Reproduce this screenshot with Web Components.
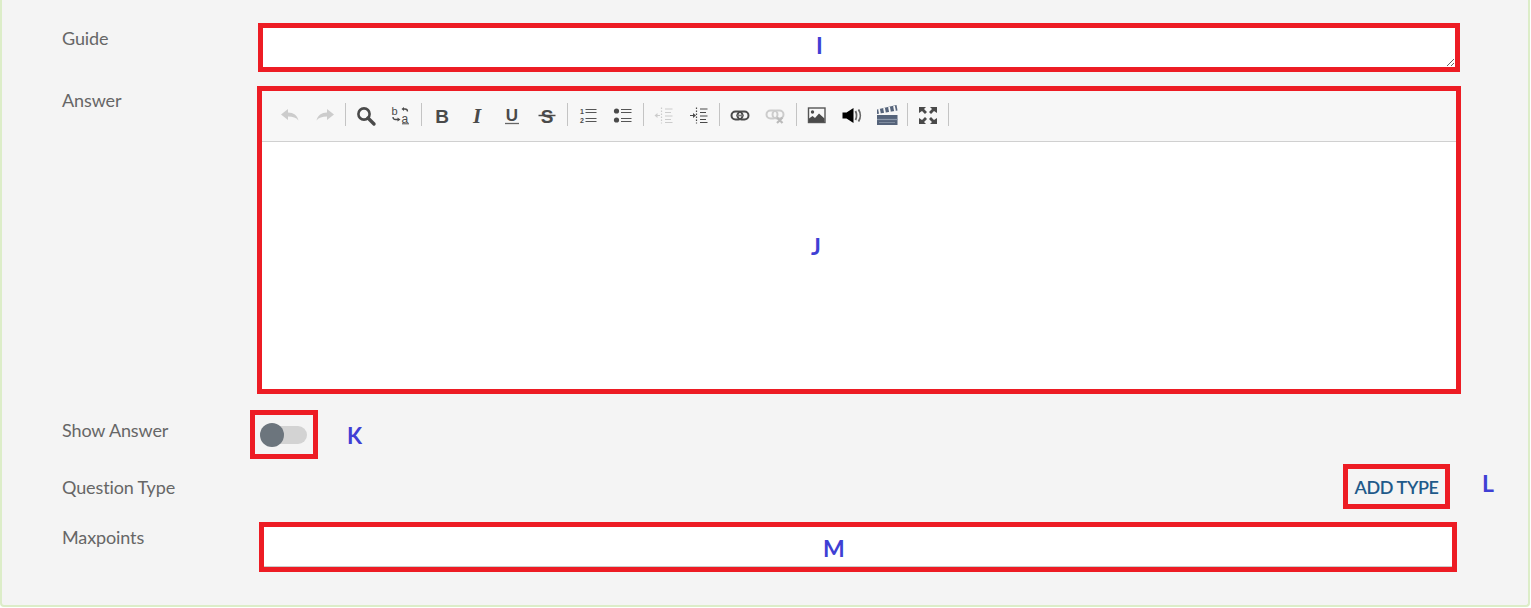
<!DOCTYPE html>
<html lang="en">
<head>
<meta charset="utf-8">
<title>Question form</title>
<style>
    html, body { margin: 0; background: #fff; font-family: Lato, "Liberation Sans", sans-serif; }
</style>
</head>
<body>
<form-panel>
    <form-row label="Guide" label-top="3">
        <guide-field></guide-field>
    </form-row>
    <form-row label="Answer" label-top="2">
        <rich-editor></rich-editor>
    </form-row>
    <form-row label="Show Answer" label-top="8">
        <show-toggle></show-toggle>
    </form-row>
    <form-row label="Question Type" label-top="11">
        <add-type></add-type>
    </form-row>
    <form-row label="Maxpoints" label-top="3">
        <max-points></max-points>
    </form-row>
</form-panel>

<script>
const ICONS = {
    undo: `<path fill="#ccc" d="M1 9.500 8 4v3.400c5.500 0 9.300 2.700 10.500 8-2.500-3-5.500-4-10.500-4V15z"/>`,
    redo: `<path fill="#ccc" d="M19 9.500 12 4v3.400c-5.500 0-9.300 2.700-10.500 8 2.500-3 5.500-4 10.500-4V15z"/>`,
    search: `<circle cx="8" cy="9" r="5.600" fill="none" stroke="#4a4a4a" stroke-width="2.600"/><path d="M12 13l6 6" stroke="#4a4a4a" stroke-width="3.400" stroke-linecap="round"/>`,
    replace: `<text x="0.500" y="9.500" font-family="Liberation Sans" font-size="11" fill="#4a4a4a">b</text><text x="10.500" y="17.500" font-family="Liberation Sans" font-size="12" fill="#4a4a4a">a</text><path d="M11 18.800h7" stroke="#4a4a4a" stroke-width="1"/><path d="M16.500 6.500c0-1.500-1-2.500-2.500-2.500h-2" fill="none" stroke="#4a4a4a" stroke-width="1.300"/><path d="M10.500 4l2.500-2v4z" fill="#4a4a4a"/><path d="M2 12c0 1.500 1 2.500 2.500 2.500H7" fill="none" stroke="#4a4a4a" stroke-width="1.300"/><path d="M9.500 14.500l-3-2v4z" fill="#4a4a4a"/>`,
    bold: `<text x="10" y="17.500" text-anchor="middle" font-family="Liberation Sans" font-weight="700" font-size="19" fill="#4a4a4a">B</text>`,
    italic: `<text x="10" y="17.500" text-anchor="middle" font-family="Liberation Serif" font-style="italic" font-weight="700" font-size="21" fill="#4a4a4a">I</text>`,
    underline: `<text x="10" y="15.500" text-anchor="middle" font-family="Liberation Sans" font-weight="700" font-size="17" fill="#4a4a4a">U</text><path d="M3 18.500h14" stroke="#666" stroke-width="1.300"/>`,
    strike: `<text x="10" y="17.500" text-anchor="middle" font-family="Liberation Sans" font-weight="700" font-size="19" fill="#4a4a4a">S</text><path d="M1.500 10.500h17" stroke="#4a4a4a" stroke-width="1.500"/>`,
    ordered: `<text x="2" y="9" font-family="Liberation Sans" font-weight="700" font-size="7" fill="#4a4a4a">1</text><text x="2" y="17.500" font-family="Liberation Sans" font-weight="700" font-size="7" fill="#4a4a4a">2</text><path d="M7.500 4.500h11M7.500 7.500h11M7.500 13.500h11M7.500 16.500h11" stroke="#555" stroke-width="1.200"/>`,
    bullets: `<circle cx="3.500" cy="6" r="2.600" fill="#4a4a4a"/><circle cx="3.500" cy="15" r="2.600" fill="#4a4a4a"/><path d="M8 4.500h10.500M8 7.500h10.500M8 13.500h10.500M8 16.500h10.500" stroke="#555" stroke-width="1.200"/>`,
    outdent: `<g stroke="#ccc" stroke-width="1.200" fill="none"><path d="M7.500 2.500v16" stroke-dasharray="1.500 1.500"/><path d="M11 4h7.500M11 7.500h6M11 11h7.500M11 14.500h6M11 17.500h7.500M6 10.500H1.500"/></g><path d="M0.500 10.500l3-2.500v5z" fill="#ccc"/>`,
    indent: `<g stroke="#4a4a4a" stroke-width="1.200" fill="none"><path d="M7.500 2.500v16" stroke-dasharray="1.500 1.500"/><path d="M11 4h7.500M11 7.500h6M11 11h7.500M11 14.500h6M11 17.500h7.500M1 10.500h4"/></g><path d="M7 10.500 4 8v5z" fill="#4a4a4a"/>`,
    link: `<g fill="none" stroke="#4a4a4a" stroke-width="2"><rect x="1.500" y="6.500" width="11" height="8" rx="4"/><rect x="7.500" y="6.500" width="11" height="8" rx="4"/></g><path d="M6 10.500h8" stroke="#777" stroke-width="1.600"/>`,
    unlink: `<g fill="none" stroke="#ccc" stroke-width="2"><rect x="1.500" y="5.500" width="11" height="8" rx="4"/><rect x="7.500" y="5.500" width="11" height="8" rx="4"/></g><path d="M12 12.500l5.500 5.500M17.500 12.500 12 18" stroke="#bbb" stroke-width="2.200"/>`,
    image: `<rect x="1.500" y="3" width="16.500" height="14.500" fill="#f7f7f7" stroke="#555" stroke-width="1.400"/><circle cx="5.500" cy="7" r="1.700" fill="#4a4a4a"/><path d="M2 17v-3.500l3.500-2.500 2.500 2 4-4.500 5.500 5V17z" fill="#4a4a4a"/>`,
    sound: `<path d="M0.500 7.500h4L11.500 3v15l-7-4.500h-4z" fill="#000"/><path d="M13.500 6c1.300 2.800 1.300 6.200 0 9M16.500 4.500c2.300 3.500 2.300 8.500 0 12" fill="none" stroke="#666" stroke-width="1.800"/>`,
    video: `<path d="M0 10h20.500v10H0z" fill="#55637a"/><path d="M0 4.500 19.500 0l1 5.500L0 9z" fill="#55637a"/><path d="M3 9l-1-5M8 8l-1-5M13 7l-1-5M18 6l-1-5" stroke="#f7f7f7" stroke-width="1.800"/><path d="M0 14.500h20.500" stroke="#8c98aa" stroke-width="1.200"/><path d="M2 17.500h16" stroke="#7f8c9f" stroke-width="1"/>`,
    fullscreen: `<g fill="#4a4a4a"><path d="M1 2h7L6 4l3 3-2 2-3-3-3 2z"/><path d="M19 2h-7l2 2-3 3 2 2 3-3 3 2z"/><path d="M1 19h7l-2-2 3-3-2-2-3 3-3-2z"/><path d="M19 19h-7l2-2-3-3 2-2 3 3 3-2z"/></g>`
};

class FormPanel extends HTMLElement {
    constructor() {
        super();
        this.attachShadow({ mode: 'open' });
        this.shadowRoot.innerHTML = `
            <style>
                :host {
                    display: flex;
                    flex-direction: column;
                    box-sizing: border-box;
                    height: 607px;
                    margin-right: 1px;
                    padding: 23px 0 0 0;
                    background: #f4f4f4;
                    border: 2px solid #dcedc8;
                    border-top: none;
                    border-radius: 0 0 4px 4px;
                }
            </style>
            <slot></slot>
        `;
    }
}

class FormRow extends HTMLElement {
    constructor() {
        super();
        this.attachShadow({ mode: 'open' });
        this.shadowRoot.innerHTML = `
            <style>
                :host {
                    display: grid;
                    grid-template-columns: 195px 1fr;
                    padding-left: 60px;
                    color: #666;
                    font: 400 18px/24px Lato, "Liberation Sans", sans-serif;
                }
                .label { letter-spacing: -0.12px; }
            </style>
            <div class="label" id="label"></div>
            <div><slot></slot></div>
        `;
    }

    connectedCallback() {
        const label = this.shadowRoot.querySelector('#label');
        label.textContent = this.getAttribute('label');
        label.style.paddingTop = this.getAttribute('label-top') + 'px';
    }
}

class GuideField extends HTMLElement {
    constructor() {
        super();
        this.attachShadow({ mode: 'open' });
        this.shadowRoot.innerHTML = `
            <style>
                :host { display: block; position: relative; margin: 0 68px 14px 1px; height: 49px; }
                textarea {
                    display: block;
                    box-sizing: border-box;
                    width: 100%;
                    height: 49px;
                    border: 5px solid #ed1c24;
                    background: #fff;
                    outline: none;
                    padding: 0;
                }
                span {
                    position: absolute;
                    left: 558px;
                    top: 7px;
                    color: #3f3fd4;
                    font: 700 23px/30px Lato, sans-serif;
                }
            </style>
            <textarea aria-label="Guide"></textarea>
            <span>I</span>
        `;
    }
}

class ToolIcon extends HTMLElement {
    constructor() {
        super();
        this.attachShadow({ mode: 'open' });
        this.shadowRoot.innerHTML = `
            <style>
                :host { display: flex; align-items: center; justify-content: center; width: 35px; height: 24px; }
                svg { width: 20px; height: 20px; display: block; overflow: visible; }
            </style>
            <svg viewBox="0 0 20 20">${ICONS[this.getAttribute('name')] || ''}</svg>
        `;
    }
}

class RichEditor extends HTMLElement {
    constructor() {
        super();
        this.attachShadow({ mode: 'open' });
        const groups = [
            ['undo', 'redo'],
            ['search', 'replace'],
            ['bold', 'italic', 'underline', 'strike'],
            ['ordered', 'bullets'],
            ['outdent', 'indent'],
            ['link', 'unlink'],
            ['image', 'sound', 'video'],
            ['fullscreen']
        ];
        const bar = groups.map(group =>
            group.map(name => `<tool-icon name="${name}"></tool-icon>`).join('') + '<i></i>'
        ).join('');
        this.shadowRoot.innerHTML = `
            <style>
                :host {
                    display: flex;
                    flex-direction: column;
                    position: relative;
                    box-sizing: border-box;
                    height: 308px;
                    margin: 0 67px 16px 0;
                    border: 5px solid #ed1c24;
                    background: #fff;
                }
                .bar {
                    display: flex;
                    align-items: center;
                    height: 47px;
                    padding: 0 0 3px 10px;
                    background: #f7f7f7;
                    border-bottom: 1px solid #d0d0d0;
                }
                i { width: 1px; height: 23px; margin: 0 2.600px; background: #c4c4c4; }
                span {
                    position: absolute;
                    left: 549px;
                    top: 140px;
                    color: #3f3fd4;
                    font: 700 23px/30px Lato, sans-serif;
                }
            </style>
            <div class="bar">${bar}</div>
            <span>J</span>
        `;
    }
}

class ShowToggle extends HTMLElement {
    constructor() {
        super();
        this.attachShadow({ mode: 'open' });
        this.shadowRoot.innerHTML = `
            <style>
                :host { display: flex; align-items: center; margin: 0 0 5px -7px; height: 49px; }
                .box {
                    box-sizing: border-box;
                    display: flex;
                    align-items: center;
                    width: 68px;
                    height: 49px;
                    padding-left: 5px;
                    border: 5px solid #ed1c24;
                }
                .track { position: relative; width: 44px; height: 18px; margin-left: 3px; border-radius: 9px; background: #d3d3d3; }
                .knob { position: absolute; left: -3px; top: -3px; width: 24px; height: 24px; border-radius: 50%; background: #6c757d; }
                span { margin: 3px 0 0 29px; color: #3f3fd4; font: 700 22px/30px Lato, sans-serif; }
            </style>
            <div class="box"><div class="track"><div class="knob"></div></div></div>
            <span>K</span>
        `;
    }
}

class AddType extends HTMLElement {
    constructor() {
        super();
        this.attachShadow({ mode: 'open' });
        this.shadowRoot.innerHTML = `
            <style>
                :host { display: flex; justify-content: flex-end; align-items: flex-start; margin: 0 34px 13px 0; height: 45px; }
                .box {
                    box-sizing: border-box;
                    display: flex;
                    align-items: center;
                    justify-content: center;
                    width: 107px;
                    height: 45px;
                    border: 5px solid #ed1c24;
                    color: #1f5a8a;
                    font: 600 18px/24px Lato, sans-serif;
                    letter-spacing: -0.4px;
                }
                span { margin-left: 32px; color: #3f3fd4; font: 700 23px/38px Lato, sans-serif; }
            </style>
            <div class="box">ADD TYPE</div>
            <span>L</span>
        `;
    }
}

class MaxPoints extends HTMLElement {
    constructor() {
        super();
        this.attachShadow({ mode: 'open' });
        this.shadowRoot.innerHTML = `
            <style>
                :host { display: block; position: relative; margin: 0 71px 0 2px; height: 50px; }
                input {
                    display: block;
                    box-sizing: border-box;
                    width: 100%;
                    height: 50px;
                    border: 5px solid #ed1c24;
                    background: #fff;
                    box-shadow: inset 0 -1px 0 #ccc;
                    outline: none;
                    padding: 0;
                }
                span {
                    position: absolute;
                    left: 564px;
                    top: 11px;
                    color: #3f3fd4;
                    font: 700 23px/30px Lato, sans-serif;
                }
            </style>
            <input type="text" aria-label="Maxpoints">
            <span>M</span>
        `;
    }
}

customElements.define('form-panel', FormPanel);
customElements.define('form-row', FormRow);
customElements.define('guide-field', GuideField);
customElements.define('tool-icon', ToolIcon);
customElements.define('rich-editor', RichEditor);
customElements.define('show-toggle', ShowToggle);
customElements.define('add-type', AddType);
customElements.define('max-points', MaxPoints);
</script>
</body>
</html>
